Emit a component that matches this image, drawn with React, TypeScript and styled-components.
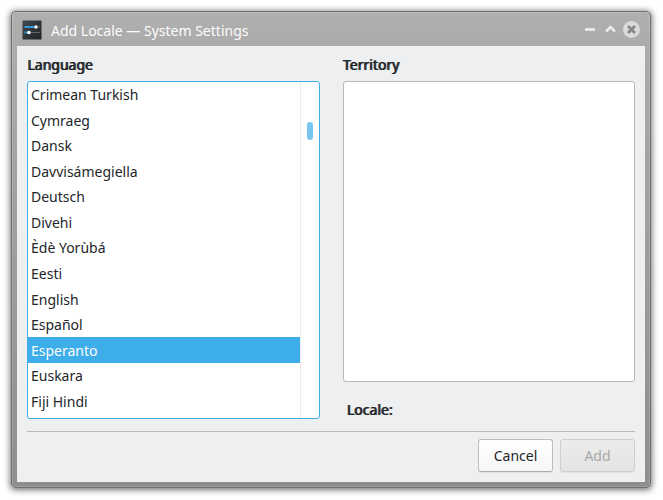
import React, { useState } from 'react';
import styled, { createGlobalStyle } from 'styled-components';

const GlobalStyle = createGlobalStyle`
  *, *::before, *::after { box-sizing: border-box; }
  body {
    margin: 0;
    background: #fff;
    color: #232629;
    font: 14px/20px 'Noto Sans', sans-serif;
  }
  button { font: inherit; color: inherit; }
`;

const Desktop = styled.main`
  display: flex;
  min-height: 100vh;
  padding: 11px 12px 12px 11px;
`;

const Window = styled.section`
  flex: 1;
  min-width: 0;
  display: flex;
  flex-direction: column;
  padding: 0 5px 5px;
  border: 1px solid #707070;
  border-radius: 4px;
  background: linear-gradient(#b0b0b0, #ababab 34px, #8e8e8e);
  box-shadow: inset 0 0 0 1px rgba(255, 255, 255, 0.15), 0 1px 6px 1px rgba(0, 0, 0, 0.55);
`;

const TitleBar = styled.header`
  display: flex;
  align-items: center;
  height: 34px;
  padding: 2px 4px 0 5px;
  color: #fcfcfc;
`;

const AppIcon = styled.svg`
  flex: none;
  width: 20px;
  height: 20px;
  margin-right: 9px;
`;

const Title = styled.h1`
  flex: 1;
  margin: 0;
  padding-top: 1px;
  font-size: 14px;
  font-weight: 400;
`;

const Controls = styled.div`
  display: flex;
  gap: 3px;
`;

const ControlButton = styled.button`
  display: block;
  width: 18px;
  height: 18px;
  padding: 0;
  border: 0;
  background: none;
  svg { display: block; }
`;

const Body = styled.div`
  flex: 1;
  display: flex;
  flex-direction: column;
  padding: 8px 10px 10px;
  border: solid #f3f4f5;
  border-width: 1px 0 0;
  background: #eeeff1;
`;

const Columns = styled.div`
  flex: 1;
  display: grid;
  grid-template-columns: 1fr 1fr;
  gap: 23px;
`;

const Column = styled.div`
  display: flex;
  flex-direction: column;
  min-width: 0;
`;

const Heading = styled.h2`
  margin: 0 0 6px;
  font-size: 14px;
  line-height: 20px;
  font-weight: 400;
  text-shadow: 1px 0 0 currentColor;
`;

const Panel = styled.div<{ $focused?: boolean }>`
  flex: 1;
  display: flex;
  border: 1px solid ${({ $focused }) => ($focused ? '#3daee9' : '#b9babb')};
  border-radius: 3px;
  background: #fff;
  overflow: hidden;
`;

const Options = styled.ul`
  flex: 1;
  display: grid;
  grid-auto-rows: 1fr;
  margin: 0;
  padding: 0 0 4px;
  list-style: none;
`;

const OptionButton = styled.button<{ $selected: boolean }>`
  display: block;
  width: 100%;
  height: 100%;
  padding: 1px 3px 0;
  border: 0;
  text-align: left;
  background: ${({ $selected }) => ($selected ? '#3daee9' : 'transparent')};
  color: ${({ $selected }) => ($selected ? '#fcfcfc' : '#232629')};
`;

const ScrollTrack = styled.div`
  width: 19px;
  padding: 40px 6px 0;
  border-left: 1px solid #ededee;
`;

const ScrollThumb = styled.div`
  height: 18px;
  border-radius: 3px;
  background: #77c4ee;
`;

const LocaleLabel = styled.p`
  margin: 0;
  padding: 18px 4px 0;
  height: 37px;
  line-height: 20px;
  text-shadow: 1px 0 0 currentColor;
`;

const Footer = styled.footer`
  display: flex;
  justify-content: flex-end;
  gap: 7px;
  margin-top: 12px;
  padding-top: 7px;
  border-top: 1px solid #b9babc;
`;

const PushButton = styled.button`
  width: 75px;
  height: 33px;
  padding: 0;
  border: 1px solid #bcbdbe;
  border-bottom-color: #acadae;
  border-radius: 3px;
  background: linear-gradient(#fff, #f6f6f6);
  box-shadow: 0 1px 0 rgba(0, 0, 0, 0.06);
  &:disabled {
    border-color: #cdcecf;
    background: linear-gradient(#ececed, #e4e4e5);
    color: #a7a9aa;
  }
`;

const languages = [
  'Crimean Turkish', 'Cymraeg', 'Dansk', 'Davvisámegiella', 'Deutsch', 'Divehi', 'Èdè Yorùbá',
  'Eesti', 'English', 'Español', 'Esperanto', 'Euskara', 'Fiji Hindi',
];

function SettingsIcon() {
  return (
    <AppIcon viewBox="0 0 20 20" aria-hidden="true">
      <defs>
        <linearGradient id="tile" x1="0" y1="0" x2="1" y2="1">
          <stop offset="0" stopColor="#414850" />
          <stop offset="1" stopColor="#202326" />
        </linearGradient>
      </defs>
      <rect x="0.5" y="0.5" width="19" height="19" fill="url(#tile)" />
      <path d="M15 7h3M8 12.5h10" stroke="#60666c" strokeWidth="1.2" />
      <path d="M2.500 7h11.500M2.500 12.500h4.500" stroke="#309bd5" strokeWidth="2" />
      <circle cx="14" cy="7" r="1.7" fill="#fff" />
      <circle cx="7" cy="12.5" r="1.7" fill="#fff" />
    </AppIcon>
  );
}

export default function App() {
  const [selected, setSelected] = useState('Esperanto');
  return (
    <>
      <GlobalStyle />
      <Desktop>
        <Window aria-labelledby="window-title">
          <TitleBar>
            <SettingsIcon />
            <Title id="window-title">Add Locale — System Settings</Title>
            <Controls>
              <ControlButton aria-label="Minimize">
                <svg width="18" height="18" viewBox="0 0 18 18">
                  <path d="M4 8.500h10" stroke="#ececec" strokeWidth="2.600" />
                </svg>
              </ControlButton>
              <ControlButton aria-label="Maximize">
                <svg width="18" height="18" viewBox="0 0 18 18">
                  <path d="M4 10.500l4.500-4.500 4.500 4.500" fill="none" stroke="#ececec" strokeWidth="2.600" />
                </svg>
              </ControlButton>
              <ControlButton aria-label="Close">
                <svg width="18" height="18" viewBox="0 0 18 18">
                  <circle cx="8.5" cy="8.5" r="8.5" fill="#d9dada" />
                  <path d="M5 5l7 7M12 5l-7 7" stroke="#858686" strokeWidth="2.600" />
                </svg>
              </ControlButton>
            </Controls>
          </TitleBar>
          <Body>
            <Columns>
              <Column>
                <Heading id="language">Language</Heading>
                <Panel $focused>
                  <Options aria-labelledby="language">
                    {languages.map((name) => (
                      <li key={name}>
                        <OptionButton
                          $selected={name === selected}
                          aria-pressed={name === selected}
                          onClick={() => setSelected(name)}
                        >
                          {name}
                        </OptionButton>
                      </li>
                    ))}
                  </Options>
                  <ScrollTrack aria-hidden="true">
                    <ScrollThumb />
                  </ScrollTrack>
                </Panel>
              </Column>
              <Column>
                <Heading id="territory">Territory</Heading>
                <Panel role="group" aria-labelledby="territory" />
                <LocaleLabel>Locale:</LocaleLabel>
              </Column>
            </Columns>
            <Footer>
              <PushButton>Cancel</PushButton>
              <PushButton disabled>Add</PushButton>
            </Footer>
          </Body>
        </Window>
      </Desktop>
    </>
  );
}
